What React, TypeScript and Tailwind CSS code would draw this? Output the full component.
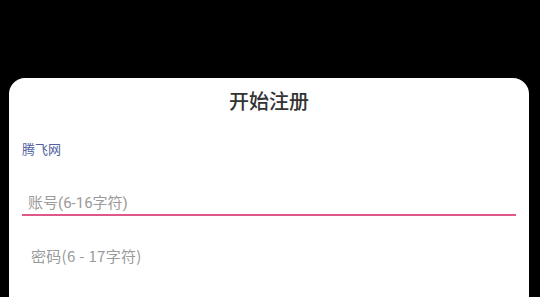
export default function App() {
  return (
    <div
      className="h-[297px] w-[540px] overflow-hidden bg-black pt-[78px]"
      style={{ fontFamily: 'Roboto, "Noto Sans CJK SC", sans-serif' }}
    >
      <div className="ml-[9px] h-[260px] w-[520px] rounded-t-[16px] bg-white">
        <div className="pt-[10px] text-center text-[20px] font-medium leading-[28px] text-[#333333]">
          开始注册
        </div>
        <div className="ml-[13px] mt-[25px] text-[13px] leading-[18px] text-[#5060a0]">
          腾飞网
        </div>
        <div className="mx-[13px] mt-[33px] border-b-2 border-[#e0578a] pl-[6px] text-[15px] leading-[22px] text-[#9a9a9a]">
          账号(6-16字符)
        </div>
        <div
          className="mx-[13px] mt-[29px] pl-[9px] text-[15px] leading-[22px] tracking-[0.3px] text-[#9a9a9a]"
          style={{ fontFamily: '"Noto Sans CJK SC", sans-serif' }}
        >
          密码(6 - 17字符)
        </div>
      </div>
    </div>
  );
}
